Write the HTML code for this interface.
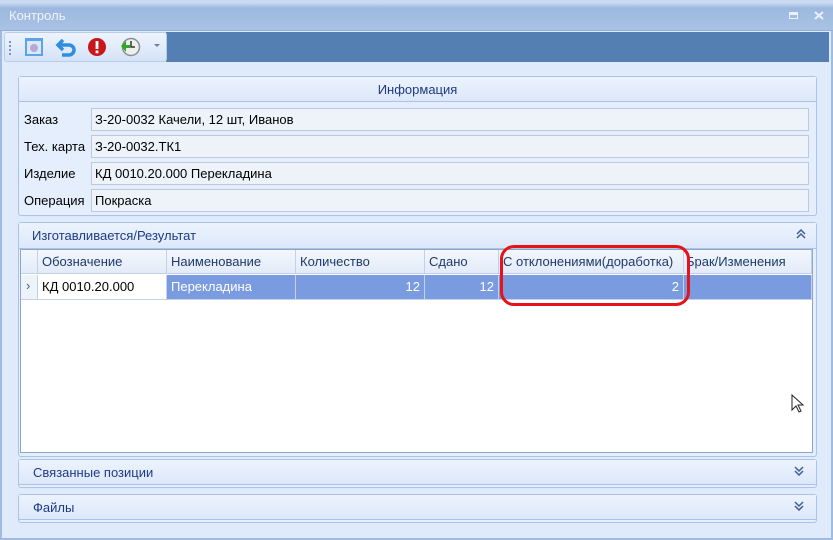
<!DOCTYPE html>
<html><head><meta charset="utf-8"><style>
*{box-sizing:border-box;margin:0;padding:0}
body{width:833px;height:540px;overflow:hidden;background:#dfeafb;font-family:"Liberation Sans","DejaVu Sans",sans-serif;font-size:13px;color:#000;position:relative}
.abs{position:absolute}
.title{left:0;top:0;width:833px;height:31px;background:linear-gradient(#c9d9f0 0,#c9d9f0 3px,#9cb8de 8px,#aac3e5 30px);border-bottom:1px solid #8fb0dc}
.title span{position:absolute;left:9px;top:8px;color:#eef4fc;font-size:13px}
.panel{border:1px solid #a9c4e8;border-radius:3px;background:#e4eefc}
.hdr{background:linear-gradient(#ecf3fd,#dce8fa);border-bottom:1px solid #a9c4e8;color:#1f3a84;font-size:13px}
.inp{left:91px;width:718px;height:23px;background:#eef3fa;border:1px solid #bccadd;padding:3px 3px;font-size:13px}
.lbl{left:24px;font-size:13px}
.grid{left:20px;top:249px;width:793px;height:204px;background:#fff;border:1px solid #8ea6c8}
.th{position:absolute;top:0;height:24px;border-right:1px solid #c2d1e6;border-bottom:1px solid #c2d1e6;background:linear-gradient(#f3f7fd,#e2ebf8);padding:4px 4px;color:#1f3a6a}
.td{position:absolute;top:25px;height:24px;border-right:1px solid #c5d3ea;padding:4px 4px;background:#7b9be0;color:#fff}
</style></head><body>
<div class="abs title"><span>Контроль</span>
<div class="abs" style="left:789px;top:12px;width:9px;height:7px;border:1px solid #eaf1fb;border-top-width:3px"></div>
<svg class="abs" style="left:814px;top:11px" width="10" height="9"><path d="M1 1L9 8M9 1L1 8" stroke="#eaf1fb" stroke-width="2"/></svg>
</div>
<div class="abs" style="left:0;top:31px;width:2px;height:509px;background:#9fbbe0"></div>
<div class="abs" style="left:831px;top:31px;width:2px;height:509px;background:#9fbbe0"></div>
<div class="abs" style="left:0;top:538px;width:833px;height:2px;background:#9fbbe0"></div>
<div class="abs" style="left:166px;top:32px;width:663px;height:30px;background:#537fb3"></div>
<div class="abs" style="left:4px;top:32px;width:163px;height:30px;background:linear-gradient(#eef4fd,#d5e3f7);border:1px solid #b9cde9;border-radius:3px"></div>
<div class="abs" style="left:9px;top:41px;width:2px;height:14px;border-left:2px dotted #7d96bb"></div>
<svg class="abs" style="left:24px;top:37px" width="20" height="20"><rect x="1" y="1" width="18" height="18" fill="#5ba4ec"/><rect x="3" y="4" width="14" height="13" fill="#dbe8f8"/><circle cx="10" cy="11" r="4" fill="#b9a7d6"/></svg>
<svg class="abs" style="left:55px;top:37px" width="22" height="20"><path d="M8 3 L3 8 L8 13 M3 8 H14 A5 5 0 0 1 14 18 H7" fill="none" stroke="#2e8fe0" stroke-width="3.5"/></svg>
<svg class="abs" style="left:87px;top:37px" width="20" height="20"><circle cx="10" cy="10" r="9" fill="#c8161d"/><rect x="8.6" y="4" width="2.8" height="8" fill="#fff"/><rect x="8.6" y="13.5" width="2.8" height="2.8" fill="#fff"/></svg>
<svg class="abs" style="left:119px;top:37px" width="22" height="20"><circle cx="12" cy="10" r="8.5" fill="#eef0ee" stroke="#8a8f94" stroke-width="1.5"/><path d="M12 4V10H16" stroke="#333" stroke-width="1.5" fill="none"/><path d="M2 9 L7 15 L7 11 H11 V8 H7 V4Z" fill="#2fa82a"/></svg>
<div class="abs" style="left:154px;top:44px;border:3px solid transparent;border-top:3px solid #6b7f9f"></div>

<div class="abs panel" style="left:18px;top:76px;width:799px;height:140px">
<div class="hdr" style="height:25px;text-align:center;padding-top:5px">Информация</div></div>
<div class="abs lbl" style="top:112px">Заказ</div><div class="abs inp" style="top:108px">З-20-0032 Качели, 12 шт, Иванов</div>
<div class="abs lbl" style="top:139px">Тех. карта</div><div class="abs inp" style="top:135px">З-20-0032.ТК1</div>
<div class="abs lbl" style="top:166px">Изделие</div><div class="abs inp" style="top:162px">КД 0010.20.000 Перекладина</div>
<div class="abs lbl" style="top:193px">Операция</div><div class="abs inp" style="top:189px">Покраска</div>

<div class="abs panel" style="left:18px;top:222px;width:799px;height:235px">
<div class="hdr" style="height:26px;padding:5px 0 0 13px">Изготавливается/Результат</div></div>
<svg class="abs" style="left:796px;top:229px" width="10" height="10"><path d="M1 5L5 1L9 5M1 9L5 5L9 9" fill="none" stroke="#3d5f93" stroke-width="1.5"/></svg>
<div class="abs grid">
<div class="th" style="left:0;width:17px"></div>
<div class="th" style="left:17px;width:129px">Обозначение</div>
<div class="th" style="left:146px;width:129px">Наименование</div>
<div class="th" style="left:275px;width:129px">Количество</div>
<div class="th" style="left:404px;width:74px">Сдано</div>
<div class="th" style="left:478px;width:185px">С отклонениями(доработка)</div>
<div class="th" style="left:663px;width:128px;padding-left:2px">Брак/Изменения</div>
<div class="td" style="left:0;width:17px;background:#eef3fa;border-right:1px solid #c2d1e6;color:#3d5f93;padding:3px 5px">›</div>
<div class="td" style="left:17px;width:129px;background:#fff;color:#000">КД 0010.20.000</div>
<div class="td" style="left:146px;width:129px">Перекладина</div>
<div class="td" style="left:275px;width:129px;text-align:right">12</div>
<div class="td" style="left:404px;width:74px;text-align:right">12</div>
<div class="td" style="left:478px;width:185px;text-align:right">2</div>
<div class="td" style="left:663px;width:128px"></div>
<div class="abs" style="left:0;top:49px;width:791px;height:1px;background:#c5d3ea"></div>
</div>
<div class="abs" style="left:500px;top:245px;width:190px;height:61px;border:3px solid #e8121a;border-radius:14px"></div>
<svg class="abs" style="left:791px;top:394px" width="14" height="20"><path d="M1 1V16L5 12L8 18L10 17L7 11H12Z" fill="#fff" stroke="#222" stroke-width="1"/></svg>

<div class="abs panel" style="left:18px;top:459px;width:799px;height:29px">
<div class="hdr" style="height:25px;padding:5px 0 0 14px">Связанные позиции</div></div>
<svg class="abs" style="left:794px;top:466px" width="10" height="10"><path d="M1 1L5 5L9 1M1 5L5 9L9 5" fill="none" stroke="#3d5f93" stroke-width="1.5"/></svg>
<div class="abs panel" style="left:18px;top:494px;width:799px;height:29px">
<div class="hdr" style="height:25px;padding:5px 0 0 14px">Файлы</div></div>
<svg class="abs" style="left:794px;top:501px" width="10" height="10"><path d="M1 1L5 5L9 1M1 5L5 9L9 5" fill="none" stroke="#3d5f93" stroke-width="1.5"/></svg>
</body></html>
